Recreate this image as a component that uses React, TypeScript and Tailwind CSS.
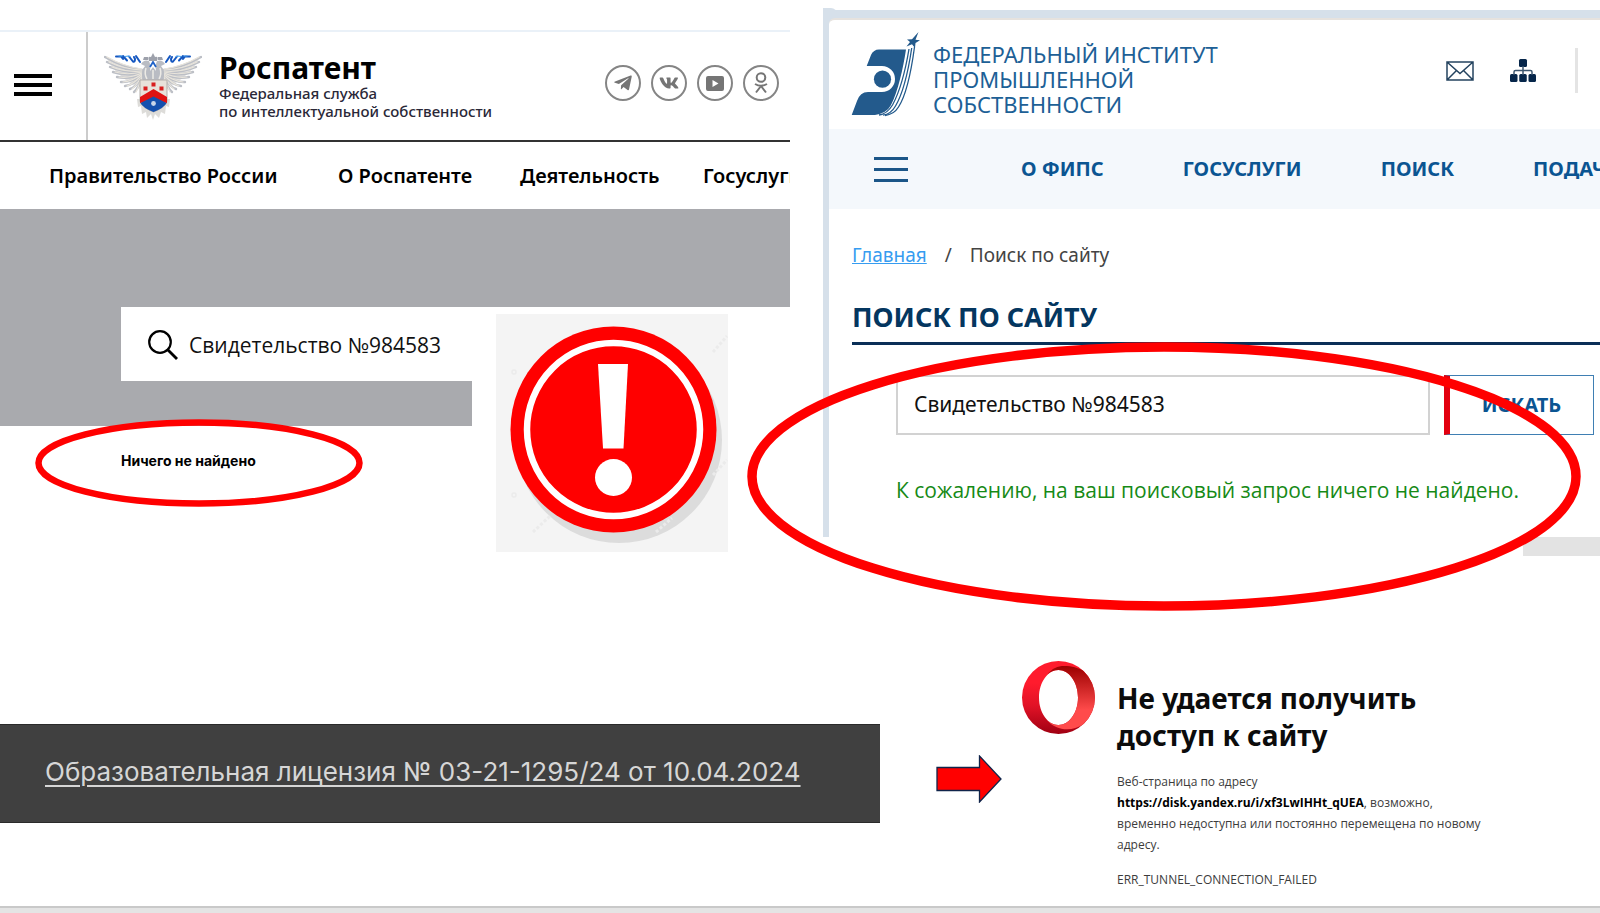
import React from "react";
import { FaTelegramPlane, FaVk } from "react-icons/fa";

const FEATHERS: [number, number, number, number][] = [
  [38, 17, 1, 4],
  [38, 18, 3, 9],
  [38, 19, 6, 14],
  [38, 20, 9, 19],
  [38, 21, 13, 24],
  [38, 22, 17, 29],
  [38, 23, 21, 33],
  [38, 24, 26, 36],
  [38, 25, 30, 39],
];

function Wing() {
  return (
    <g fill="none" strokeLinecap="round">
      <path d="M2 4 Q10 10 20 12 Q30 14 38 18 L38 28 L30 32 Q22 28 16 22 Q8 16 2 4Z" fill="#e4e2df" />
      {FEATHERS.map(([x1, y1, x2, y2]) => (
        <g key={y2}>
          <path d={`M${x1} ${y1} Q${(x1 + x2) / 2} ${(y1 + y2) / 2 + 4} ${x2} ${y2}`} stroke="#bcbfc6" strokeWidth="2.4" />
          <path d={`M${x1} ${y1 - 1} Q${(x1 + x2) / 2} ${(y1 + y2) / 2 + 3} ${x2 + 2} ${y2}`} stroke="#e9e5dc" strokeWidth="1.2" />
        </g>
      ))}
      <path d="M12 3.500 L17 3.500 L19 6 M19 3 L23 7.500 M25 3.500 L29 8.500 Q31 9.500 31 6 L30 4 M32 3 L36 9" stroke="#1557c0" strokeWidth="2" />
      <path d="M15 3 L18 3 M21 3.500 L24 3 L26 3.500" stroke="#4aa3ee" strokeWidth="1.2" />
    </g>
  );
}

function Emblem() {
  return (
    <svg viewBox="0 0 98 67" className="h-[67px] w-[98px] shrink-0" role="img" aria-label="Герб">
      <Wing />
      <g transform="translate(98 0) scale(-1 1)">
        <Wing />
      </g>
      <path d="M33 46 L34 54 L37 53 L38 61 L42 59 L43 65 L47 61 L49 67 L51 61 L55 65 L57 59 L61 61 L62 53 L65 54 L66 46Z" fill="#dddcd9" />
      <path d="M39 28 Q36 18 41 13 L37 11 Q40 6 45 8 Q47 12 46 18 L49 14 L52 18 Q51 12 53 8 Q58 6 61 11 L57 13 Q62 18 59 28Z" fill="#b9bcc3" />
      <path d="M42 15 Q40 21 43 26 M56 15 Q58 21 55 26 M49 17 V26" stroke="#eceae5" strokeWidth="1.500" fill="none" />
      <path d="M46 14 L49 9 L52 14" stroke="#1f62c8" strokeWidth="1.800" fill="none" />
      <path d="M45 8 Q43 3 47 4 L49 0 L51 4 Q55 3 53 8Z M39 7 L40 4 L44 4 L44 7Z M54 7 L54 4 L58 4 L59 7Z" fill="#9da1ab" />
      <path d="M36 27 H63 V48 Q62 54 49.500 59 Q37 54 36 48Z" fill="#e8e2da" stroke="#b3aeaa" strokeWidth="1" />
      <path d="M36 44 L49.500 36 L63 44 V50 L49.500 48 L36 50Z" fill="#e01212" />
      <path d="M36.500 50 L49.500 43.500 L62.500 50 Q60 55 49.500 59 Q39 55 36.500 50Z" fill="#1450ae" />
      <path d="M39.500 33.500 h4 v4 h-4Z M47.500 29.500 h4 v4 h-4Z M55.500 33.500 h4 v4 h-4Z" fill="#d81f1f" />
      <circle cx="49.500" cy="50.500" r="2.400" fill="#c9d6ea" />
    </svg>
  );
}

function FipsLogo() {
  return (
    <svg viewBox="0 0 70 86" className="mt-[11px] h-[86px] w-[70px] shrink-0" fill="#235a8c" role="img" aria-label="ФИПС">
      <path d="M15.700 35 L20 24 Q22.500 18.500 28 18.500 H55 C52 38 47 60 40 74 Q36 82 24 84 H0.700 L6 70 Q9 61 17 61 H31 A13 13 0 0 0 31 35Z" />
      <circle cx="31.500" cy="48.200" r="8.600" />
      <g fill="none" stroke="#235a8c" strokeWidth="1.300">
        <path d="M58 18 C54 42 48 62 41.500 74 Q36 83 28 84" />
        <path d="M60.700 17 C57 42 51 64 44.500 75 Q40 83 32 84.200" />
        <path d="M63.500 16 C60 42 54 66 47.500 76 Q43 83.500 34 84.500" />
      </g>
      <path d="M67.500 1 L64.500 8.700 L69 9.300 L64.500 12 L64 17 L61 13.200 L55.500 15.500 L59 11 L56 8.500 L61 8.300Z" />
    </svg>
  );
}

function WarningSign() {
  return (
    <svg viewBox="0 0 232 238" className="block h-[238px] w-[232px]" role="img" aria-label="Внимание">
      <rect width="232" height="238" fill="#f4f4f4" />
      <circle cx="123" cy="126" r="103" fill="#dcdcdc" />
      <circle cx="117.500" cy="115.500" r="103" fill="#ff0000" />
      <circle cx="117.500" cy="115.500" r="86.500" fill="none" stroke="#fff" strokeWidth="6.500" />
      <path d="M102 50 H132 L127.500 134.500 H107Z" fill="#fff" />
      <circle cx="117.500" cy="163.500" r="18.500" fill="#fff" />
      <g fill="none" stroke="#ebebeb" strokeWidth="1.500">
        <circle cx="18" cy="58" r="2" />
        <circle cx="18" cy="181" r="2" />
        <path d="M217 38 L231 22 M217 161 L231 146 M37 218 L54 202 M160 218 L176 204" strokeDasharray="3 2" strokeWidth="3" />
      </g>
    </svg>
  );
}

function OperaLogo() {
  return (
    <svg viewBox="0 0 73 73" className="h-[73px] w-[73px] shrink-0" role="img" aria-label="Opera">
      <defs>
        <linearGradient id="opera-left" x1="0" y1="0" x2="0" y2="1">
          <stop offset="0.300" stopColor="#ff1b2d" />
          <stop offset="0.620" stopColor="#e01226" />
          <stop offset="1" stopColor="#a00012" />
        </linearGradient>
        <linearGradient id="opera-right" x1="0" y1="0" x2="0" y2="1">
          <stop offset="0" stopColor="#9c0000" />
          <stop offset="0.700" stopColor="#ff4b4b" />
          <stop offset="1" stopColor="#ff4b4b" />
        </linearGradient>
      </defs>
      <path fillRule="evenodd" fill="url(#opera-left)" d="M36.500 0 A36.500 36.500 0 1 1 36.500 73 A36.500 36.500 0 1 1 36.500 0Z M36.500 9 C26 9 17 21 17 36.500 S26 64 36.500 64 S56 52 56 36.500 S47 9 36.500 9Z" />
      <path fill="url(#opera-right)" d="M25 14 C30 7 36 5 42 5 C50 5 56 7 61 9.500 A36.500 36.500 0 0 1 61 63.500 C50 71 34 70 25 59 C29 63 33 64 36.500 64 C47 64 56 52 56 36.500 S47 9 36.500 9 C32 9 28 10.500 25 14Z" />
    </svg>
  );
}

const SOCIALS = [
  { name: "Telegram", icon: <FaTelegramPlane className="h-5 w-5" /> },
  { name: "VK", icon: <FaVk className="h-5 w-5" /> },
  {
    name: "YouTube",
    icon: (
      <svg viewBox="0 0 18 15" className="h-[15px] w-[18px]" fill="currentColor">
        <path fillRule="evenodd" d="M2 0 H16 Q18 0 18 2 V13 Q18 15 16 15 H2 Q0 15 0 13 V2 Q0 0 2 0Z M6.500 4 V11 L12.500 7.500Z" />
      </svg>
    ),
  },
  {
    name: "Одноклассники",
    icon: (
      <svg viewBox="0 0 14 22" className="h-[22px] w-[14px]" fill="none" stroke="currentColor" strokeWidth="2">
        <circle cx="7" cy="5.500" r="4.300" />
        <path d="M1 12 Q7 15.500 13 12 M7 14 L2 20.500 M7 14 L12 20.500" />
      </svg>
    ),
  },
];

function RospatentSite() {
  return (
    <section className="min-w-0 pt-[30px]">
      <header className="box-content flex h-[108px] border-t-2 border-b-2 border-t-[#eaf1f8] border-b-[#333333]">
        <button type="button" aria-label="Меню" className="flex w-[88px] shrink-0 flex-col justify-center gap-[5px] border-r-2 border-[#cccccc] pb-[2px] pl-[14px]">
          <span className="h-1 w-[38px] bg-black" />
          <span className="h-1 w-[38px] bg-black" />
          <span className="h-1 w-[38px] bg-black" />
        </button>
        <a href="#rospatent" className="ml-4 flex items-center gap-[17px]">
          <Emblem />
          <span className="whitespace-nowrap">
            <span className="block text-[30px] leading-8 font-bold text-black">Роспатент</span>
            <span className="block text-[15px] leading-[18px] font-medium text-[#2a2838]">
              Федеральная служба
              <br />
              по интеллектуальной собственности
            </span>
          </span>
        </a>
        <div className="ml-auto flex items-center gap-[10px] pr-[11px] pb-[6px] text-[#757575]">
          {SOCIALS.map((s) => (
            <a key={s.name} href="#social" aria-label={s.name} className="flex h-9 w-9 items-center justify-center rounded-full border-2 border-[#858585]">
              {s.icon}
            </a>
          ))}
        </div>
      </header>
      <nav className="grid h-[67px] grid-cols-[289px_182px_183px_1fr] items-center overflow-hidden pl-[49px] text-xl font-semibold whitespace-nowrap text-black">
        <a href="#gov">Правительство России</a>
        <a href="#about">О Роспатенте</a>
        <a href="#activity">Деятельность</a>
        <a href="#services" className="min-w-0 overflow-hidden">Госуслуги</a>
      </nav>
      <div className="h-[98px] bg-[#a9aaae]" />
      <div className="flex items-start">
        <div className="w-[472px] shrink-0">
          <div className="bg-[#a9aaae] pb-[45px] pl-[121px]">
            <form className="flex h-[74px] items-center gap-[11px] bg-white pt-[2px] pl-[27px]">
              <svg viewBox="0 0 30 30" className="h-[30px] w-[30px] shrink-0" fill="none" stroke="#000" strokeWidth="2.200">
                <circle cx="12" cy="12" r="10.800" />
                <path d="M19.500 19.500 L29 29" strokeWidth="2.800" />
              </svg>
              <input aria-label="Поиск" defaultValue="Свидетельство №984583" className="min-w-0 flex-1 bg-transparent font-['Open_Sans',sans-serif] text-[21px] leading-7 text-[#111111] outline-none" />
            </form>
          </div>
          <div className="relative pt-[25px] pl-[121px]">
            <p className="font-['Inter',sans-serif] text-sm font-bold text-black">Ничего не найдено</p>
            <svg viewBox="0 0 328 88" className="absolute -top-[7px] left-[35px] h-[88px] w-[328px]" fill="none" stroke="#ff0000" strokeWidth="6.500">
              <ellipse cx="164" cy="44" rx="160.500" ry="40.500" />
            </svg>
          </div>
        </div>
        <div className="mt-[7px] ml-6 shrink-0">
          <WarningSign />
        </div>
      </div>
    </section>
  );
}

function FipsSite() {
  return (
    <section className="relative min-w-0 pt-[10px]">
      <span className="absolute top-2 left-0 h-2 w-[14px] rounded-tr-md bg-[#d6e0ea]" />
      <div className="bg-[#d6e0ea] pt-2 pl-[6px]">
        <div className="overflow-hidden rounded-tl-md border-t-2 border-[#e6e2de] bg-white pb-[33px]">
          <header className="flex h-[109px] items-start pr-[22px] pl-[22px] text-[#1d6096]">
            <FipsLogo />
            <a href="#fips" className="mt-[22px] ml-3 text-[22px] leading-[25px] whitespace-nowrap">
              ФЕДЕРАЛЬНЫЙ ИНСТИТУТ
              <br />
              ПРОМЫШЛЕННОЙ
              <br />
              СОБСТВЕННОСТИ
            </a>
            <div className="mt-7 ml-auto flex h-[45px] items-center text-[#06264a]">
              <a href="#mail" aria-label="Почта">
                <svg viewBox="0 0 28 20" className="h-5 w-7" fill="none" stroke="#24435f" strokeWidth="1.500">
                  <path d="M1 1 H27 V19 H1Z M1 1 L14 12.500 L27 1 M1 19 L10.500 9.500 M27 19 L17.500 9.500" />
                </svg>
              </a>
              <a href="#map" aria-label="Карта сайта" className="ml-9">
                <svg viewBox="0 0 26 23" className="h-[23px] w-[26px]" fill="currentColor">
                  <rect x="9" y="0" width="8" height="8" rx="1.500" />
                  <rect x="0" y="15" width="7.500" height="8" rx="1.500" />
                  <rect x="9.250" y="15" width="7.500" height="8" rx="1.500" />
                  <rect x="18.500" y="15" width="7.500" height="8" rx="1.500" />
                  <path d="M13 7 V16 M4 16 V13 Q4 11.500 5.500 11.500 H20.500 Q22 11.500 22 13 V16" fill="none" stroke="#3c566f" strokeWidth="1.500" />
                </svg>
              </a>
              <span className="ml-[39px] h-[45px] w-[3px] bg-[#e4e4e4]" />
            </div>
          </header>
          <nav className="flex h-20 items-center gap-[79px] overflow-hidden bg-[#f4f8fc] pl-[45px] text-xl font-bold whitespace-nowrap text-[#0b5592]">
            <button type="button" aria-label="Меню" className="mr-[34px] flex w-[34px] shrink-0 flex-col gap-2">
              <span className="h-[3px] bg-[#1b5688]" />
              <span className="h-[3px] bg-[#1b5688]" />
              <span className="h-[3px] bg-[#1b5688]" />
            </button>
            <a href="#about-fips">О ФИПС</a>
            <a href="#gosuslugi">ГОСУСЛУГИ</a>
            <a href="#search">ПОИСК</a>
            <a href="#submit">ПОДАЧА</a>
          </nav>
          <main className="pt-[34px] pl-[23px]">
            <div className="flex gap-[18px] text-[19px] leading-6 text-[#444444]">
              <a href="#home" className="text-[#369cf0] underline">Главная</a>
              <span>/</span>
              <span>Поиск по сайту</span>
            </div>
            <h1 className="mt-8 border-b-[3px] border-[#0a2f57] pb-[7px] text-[27px] leading-9 font-bold text-[#04365f]">ПОИСК ПО САЙТУ</h1>
            <form className="mt-[30px] flex h-[60px] gap-[14px] pr-[6px] pl-[44px]">
              <input aria-label="Поисковый запрос" defaultValue="Свидетельство №984583" className="min-w-0 flex-1 border-2 border-[#d2d2d2] px-4 text-[21px] text-[#111111] outline-none" />
              <button type="button" className="w-[150px] border border-l-[6px] border-[#3f7fb3] border-l-[#e3000f] text-xl font-bold text-[#0b5592]">ИСКАТЬ</button>
            </form>
            <p className="mt-[41px] pl-[44px] font-['Open_Sans',sans-serif] text-[21px] leading-7 whitespace-nowrap text-[#168a16]">
              К сожалению, на ваш поисковый запрос ничего не найдено.
            </p>
          </main>
        </div>
      </div>
      <div className="ml-auto h-[19px] w-[77px] bg-[#e3e3e3]" />
      <svg viewBox="0 0 834 269" className="pointer-events-none absolute top-[342px] -left-[76px] h-[269px] w-[834px]" fill="none" stroke="#ff0000" strokeWidth="9.500">
        <ellipse cx="417" cy="134.500" rx="412" ry="129.500" />
      </svg>
    </section>
  );
}

export default function App() {
  return (
    <div className="flex min-h-screen flex-col overflow-x-hidden bg-white font-['Noto_Sans',sans-serif]">
      <div className="grid grid-cols-[790fr_33fr_777fr]">
        <RospatentSite />
        <div />
        <FipsSite />
      </div>
      <section className="flex items-start pt-[105px]">
        <div className="mt-[63px] flex h-[99px] w-[55%] items-center border-y border-[#2a2a2a] bg-[#404040] pb-1 pl-[45px]">
          <a href="#license" className="font-['Inter',sans-serif] text-[26px] whitespace-nowrap text-[#d6d6d6] underline decoration-2 underline-offset-4">
            Образовательная лицензия № 03-21-1295/24 от 10.04.2024
          </a>
        </div>
        <svg viewBox="0 0 66 48" className="mt-[94px] ml-14 h-12 w-[66px] shrink-0">
          <path d="M1 12.500 H43.500 V1 L65 24 L43.500 47 V35.500 H1Z" fill="#ff0000" stroke="#10244a" strokeWidth="1.300" />
        </svg>
        <article className="ml-5 flex gap-[22px]">
          <OperaLogo />
          <div className="mt-[19px] w-[370px] font-['Open_Sans',sans-serif] text-xs leading-[21px] text-[#3c3c3c]">
            <h2 className="font-['Noto_Sans',sans-serif] text-[28px] leading-[37px] font-bold text-[#0c0c0c]">
              Не удается получить
              <br />
              доступ к сайту
            </h2>
            <p className="mt-[17px]">
              Веб-страница по адресу <b className="text-black">https://disk.yandex.ru/i/xf3LwIHHt_qUEA</b>, возможно, временно недоступна или постоянно перемещена по новому адресу.
            </p>
            <p className="mt-[14px]">ERR_TUNNEL_CONNECTION_FAILED</p>
          </div>
        </article>
      </section>
      <footer className="mt-auto h-[7px] border-t-2 border-[#c9c9c9] bg-[#e4e4e4]" />
    </div>
  );
}
